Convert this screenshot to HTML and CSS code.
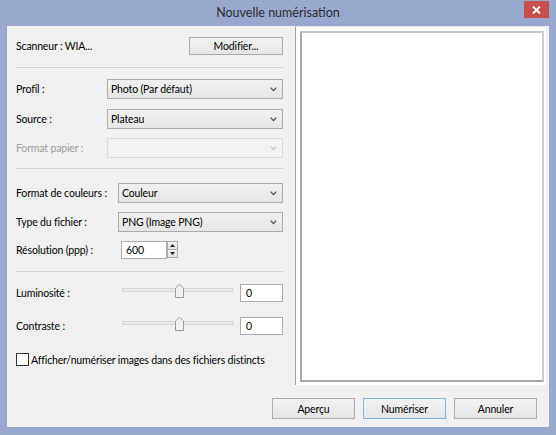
FILE: index.html
```html
<!DOCTYPE html>
<html lang="fr">
  <head>
    <meta charset="UTF-8" />
    <meta name="viewport" content="width=device-width, initial-scale=1.0" />
    <title>Nouvelle numérisation</title>
    <link rel="stylesheet" href="styles.css">
  </head>
  <body>
    <div class="window">
      <!-- Title bar -->
      <div class="titlebar">
        <span></span>
        <span class="title">Nouvelle numérisation</span>
        <span class="close">
          <svg width="9" height="8" viewBox="0 0 9 8"><path d="M1 0.5 L8 7.5 M8 0.5 L1 7.5" stroke="#fff" stroke-width="1.8" fill="none"/></svg>
        </span>
      </div>

      <div class="client">
        <div class="main">
          <!-- Settings -->
          <div class="settings">
            <div class="row scanner-row">
              <span>Scanneur : WIA...</span>
              <button class="btn btn-modify">Modifier...</button>
            </div>
            <hr class="sep sep-1">

            <div class="row">
              <span class="label label-a">Profil :</span>
              <div class="combo">
                <span>Photo (Par défaut)</span>
                <svg class="chevron" width="7" height="5" viewBox="0 0 7 5"><path d="M0.7 0.7 L3.5 3.6 L6.3 0.7" stroke="#4a4a4a" stroke-width="1.2" fill="none"/></svg>
              </div>
            </div>
            <div class="row mt-10">
              <span class="label label-a">Source :</span>
              <div class="combo">
                <span>Plateau</span>
                <svg class="chevron" width="7" height="5" viewBox="0 0 7 5"><path d="M0.7 0.7 L3.5 3.6 L6.3 0.7" stroke="#4a4a4a" stroke-width="1.2" fill="none"/></svg>
              </div>
            </div>
            <div class="row mt-9">
              <span class="label label-a disabled">Format papier :</span>
              <div class="combo combo-disabled">
                <span></span>
                <svg class="chevron" width="7" height="5" viewBox="0 0 7 5"><path d="M0.7 0.7 L3.5 3.6 L6.3 0.7" stroke="#c2c2c2" stroke-width="1.2" fill="none"/></svg>
              </div>
            </div>
            <hr class="sep sep-2">

            <div class="row">
              <span class="label label-b">Format de couleurs :</span>
              <div class="combo">
                <span>Couleur</span>
                <svg class="chevron" width="7" height="5" viewBox="0 0 7 5"><path d="M0.7 0.7 L3.5 3.6 L6.3 0.7" stroke="#4a4a4a" stroke-width="1.2" fill="none"/></svg>
              </div>
            </div>
            <div class="row mt-9">
              <span class="label label-b">Type du fichier :</span>
              <div class="combo">
                <span>PNG (Image PNG)</span>
                <svg class="chevron" width="7" height="5" viewBox="0 0 7 5"><path d="M0.7 0.7 L3.5 3.6 L6.3 0.7" stroke="#4a4a4a" stroke-width="1.2" fill="none"/></svg>
              </div>
            </div>
            <div class="row row-small mt-9">
              <span class="label label-b">Résolution (ppp) :</span>
              <div class="spin-input">600</div>
              <div class="spinner">
                <span class="spin-btn"><svg width="5" height="3" viewBox="0 0 5 3"><path d="M0 3 L2.5 0 L5 3 Z" fill="#222"/></svg></span>
                <span class="spin-btn"><svg width="5" height="3" viewBox="0 0 5 3"><path d="M0 0 L2.5 3 L5 0 Z" fill="#222"/></svg></span>
              </div>
            </div>
            <hr class="sep sep-3">

            <div class="row row-small">
              <span class="label label-b">Luminosité :</span>
              <svg class="slider" width="118" height="18" viewBox="0 0 118 18">
                <rect x="4.5" y="4.5" width="110" height="3" fill="#e7eaea" stroke="#d6d6d6"/>
                <path d="M57.5 13.5 V4 L61.5 0.5 L65.5 4 V13.5 Z" fill="#f0f0f0" stroke="#9a9a9a"/>
              </svg>
              <div class="value-input">0</div>
            </div>
            <div class="row row-small mt-15">
              <span class="label label-b">Contraste :</span>
              <svg class="slider" width="118" height="18" viewBox="0 0 118 18">
                <rect x="4.5" y="4.5" width="110" height="3" fill="#e7eaea" stroke="#d6d6d6"/>
                <path d="M57.5 13.5 V4 L61.5 0.5 L65.5 4 V13.5 Z" fill="#f0f0f0" stroke="#9a9a9a"/>
              </svg>
              <div class="value-input">0</div>
            </div>

            <div class="row row-check">
              <span class="check"></span>
              <span>Afficher/numériser images dans des fichiers distincts</span>
            </div>
          </div>

          <!-- Preview -->
          <div class="preview">
            <div class="preview-box"></div>
          </div>
        </div>

        <div class="footer">
          <button class="btn">Aperçu</button>
          <button class="btn btn-default">Numériser</button>
          <button class="btn">Annuler</button>
        </div>
      </div>
    </div>
  </body>
</html>
```

FILE: styles.css
```css
* {
  box-sizing: border-box;
}
body {
  margin: 0;
  font-family: Lato, "Liberation Sans", sans-serif;
  font-size: 10.5px;
  letter-spacing: -0.15px;
  color: #000;
}
.window {
  width: 556px;
  height: 435px;
  background-color: #98a8cf;
  padding: 0 7px 8px;
  display: flex;
  flex-direction: column;
}
.titlebar {
  height: 26px;
  display: grid;
  grid-template-columns: 1fr auto 1fr;
  align-items: start;
}
.title {
  font-size: 12.5px;
  letter-spacing: 0;
  line-height: 25px;
  color: #2b2b2b;
}
.close {
  justify-self: end;
  width: 25px;
  height: 17px;
  margin-top: 1px;
  background-color: #c7504f;
  display: flex;
  align-items: center;
  justify-content: center;
}
.client {
  flex: 1;
  background-color: #f0f0f0;
  display: flex;
  flex-direction: column;
}
.main {
  display: flex;
  height: 359px;
  padding-right: 3px;
}
.settings {
  width: 288px;
  padding: 11px 12px 0 9px;
}
.preview {
  flex: 1;
  background-color: #fff;
  border-left: 1px solid #a0a0a0;
  border-top: 1px solid #e6e6e6;
  padding: 4px 2px 3px 4px;
}
.preview-box {
  height: 100%;
  border: 2px solid;
  border-color: #c8c8c8 #cdcdcd #a6a6a6 #a6a6a6;
}
.footer {
  display: flex;
  justify-content: flex-end;
  gap: 8px;
  padding: 13px 12px 0 0;
}
.btn {
  width: 83px;
  height: 21px;
  padding: 0;
  border: 1px solid #acacac;
  background: linear-gradient(#f2f2f2, #e5e5e5);
  font: inherit;
  letter-spacing: inherit;
  color: #000;
}
.btn-default {
  border-color: #7eb4ea;
}

/* rows */
.row {
  display: flex;
  align-items: center;
  height: 20px;
  white-space: nowrap;
}
.row-small {
  height: 18px;
  align-items: flex-start;
}
.row-small .label {
  align-self: center;
}
.scanner-row {
  justify-content: space-between;
  height: 18px;
}
.btn-modify {
  width: 94px;
  height: 18px;
}
.mt-9 {
  margin-top: 9px;
}
.mt-10 {
  margin-top: 10px;
}
.mt-15 {
  margin-top: 15px;
}
.sep {
  border: none;
  border-top: 1px solid #d2d2d2;
  height: 0;
}
.sep-1 {
  margin: 12px 0 11px;
}
.sep-2 {
  margin: 10px 0 14px;
}
.sep-3 {
  margin: 12px 0 12px;
}
.label-a {
  width: 91px;
}
.label-b {
  width: 102px;
}
.disabled {
  color: #9d9d9d;
}
.combo {
  flex: 1;
  height: 20px;
  border: 1px solid #acacac;
  background: linear-gradient(#f0f0f0, #e5e5e5);
  display: flex;
  align-items: center;
  justify-content: space-between;
  padding: 0 5px 0 3px;
}
.combo-disabled {
  background: #f2f2f2;
  border-color: #d9d9d9;
}
.spin-input {
  width: 46px;
  height: 18px;
  margin-left: 3px;
  border: 1px solid #abadb3;
  background-color: #fff;
  padding-left: 4px;
  line-height: 16px;
}
.spinner {
  width: 11px;
  height: 17px;
  display: flex;
  flex-direction: column;
}
.spin-btn {
  flex: 1;
  border: 1px solid #acacac;
  background: linear-gradient(#f2f2f2, #e2e2e2);
  display: flex;
  align-items: center;
  justify-content: center;
}
.spin-btn + .spin-btn {
  border-top: none;
}
.slider {
  display: block;
}
.value-input {
  width: 43px;
  height: 18px;
  margin-left: 4px;
  border: 1px solid #abadb3;
  background-color: #fff;
  padding-left: 5px;
  line-height: 16px;
}
.row-check {
  margin-top: 18px;
  height: 13px;
}
.check {
  width: 13px;
  height: 13px;
  border: 1px solid #333;
  background-color: #fff;
  margin-right: 2px;
}
```
